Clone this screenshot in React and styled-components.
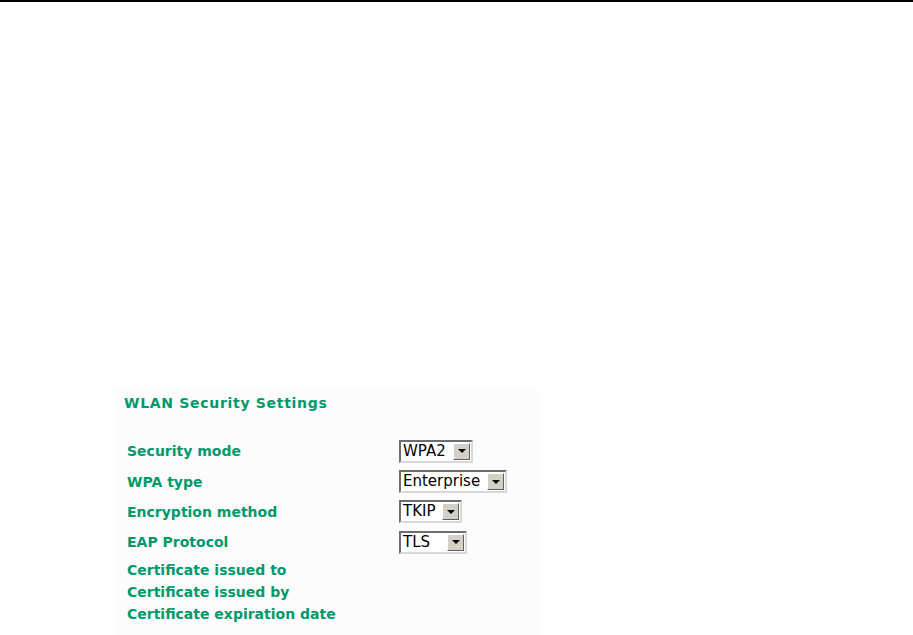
import React from 'react';
import styled, { createGlobalStyle } from 'styled-components';

const GlobalStyle = createGlobalStyle`
  html, body {
    margin: 0;
    padding: 0;
    background: #ffffff;
  }
  body {
    font-family: "DejaVu Sans", Verdana, sans-serif;
  }
`;

const Page = styled.div`
  width: 913px;
  height: 635px;
  overflow: hidden;
  border-top: 2px solid #000000;
  box-sizing: border-box;
`;

const Panel = styled.section`
  margin: 387px 0 0 115px;
  width: 424px;
  min-height: 260px;
  background: #fcfcfc;
  padding: 0 0 0 9px;
  box-sizing: border-box;
`;

const Title = styled.h2`
  margin: 0;
  height: 28px;
  line-height: 28px;
  font-size: 14px;
  letter-spacing: 0.7px;
  font-weight: bold;
  color: #00996b;
`;

const Form = styled.div`
  margin: 19px 0 0 3px;
  display: flex;
  flex-direction: column;
`;

const Row = styled.div`
  display: grid;
  grid-template-columns: 272px auto;
  align-items: center;
  height: ${(p) => p.$h}px;
`;

const Label = styled.span`
  font-size: 14px;
  font-weight: bold;
  color: #00996b;
  white-space: nowrap;
`;

const SelectBox = styled.div`
  display: flex;
  align-items: stretch;
  width: ${(p) => p.$w}px;
  height: 23px;
  box-sizing: border-box;
  border-style: solid;
  border-width: 2px;
  border-color: #6e6e6e #d8d8d8 #d8d8d8 #6e6e6e;
  background: #ffffff;
`;

const SelectText = styled.span`
  flex: 1;
  padding-left: 2px;
  font-size: 15px;
  line-height: 19px;
  color: #000000;
  white-space: nowrap;
  overflow: hidden;
`;

const ArrowButton = styled.span`
  width: 17px;
  margin: 1px;
  box-sizing: border-box;
  background: #d4d0c8;
  border-style: solid;
  border-width: 1px;
  border-color: #ffffff #606060 #606060 #ffffff;
  display: flex;
  align-items: center;
  justify-content: center;
`;

const Arrow = styled.span`
  width: 0;
  height: 0;
  border-left: 4px solid transparent;
  border-right: 4px solid transparent;
  border-top: 4px solid #000000;
`;

const Select = ({ value, width }) => (
  <SelectBox $w={width}>
    <SelectText>{value}</SelectText>
    <ArrowButton>
      <Arrow />
    </ArrowButton>
  </SelectBox>
);

const rows = [
  { label: 'Security mode', value: 'WPA2', width: 74, h: 30 },
  { label: 'WPA type', value: 'Enterprise', width: 108, h: 31 },
  { label: 'Encryption method', value: 'TKIP', width: 63, h: 29 },
  { label: 'EAP Protocol', value: 'TLS', width: 68, h: 32 },
  { label: 'Certificate issued to', h: 23 },
  { label: 'Certificate issued by', h: 22 },
  { label: 'Certificate expiration date', h: 22 },
];

export default function App() {
  return (
    <Page>
      <GlobalStyle />
      <Panel>
        <Title>WLAN Security Settings</Title>
        <Form>
          {rows.map((r) => (
            <Row key={r.label} $h={r.h}>
              <Label>{r.label}</Label>
              {r.value ? <Select value={r.value} width={r.width} /> : <span />}
            </Row>
          ))}
        </Form>
      </Panel>
    </Page>
  );
}
